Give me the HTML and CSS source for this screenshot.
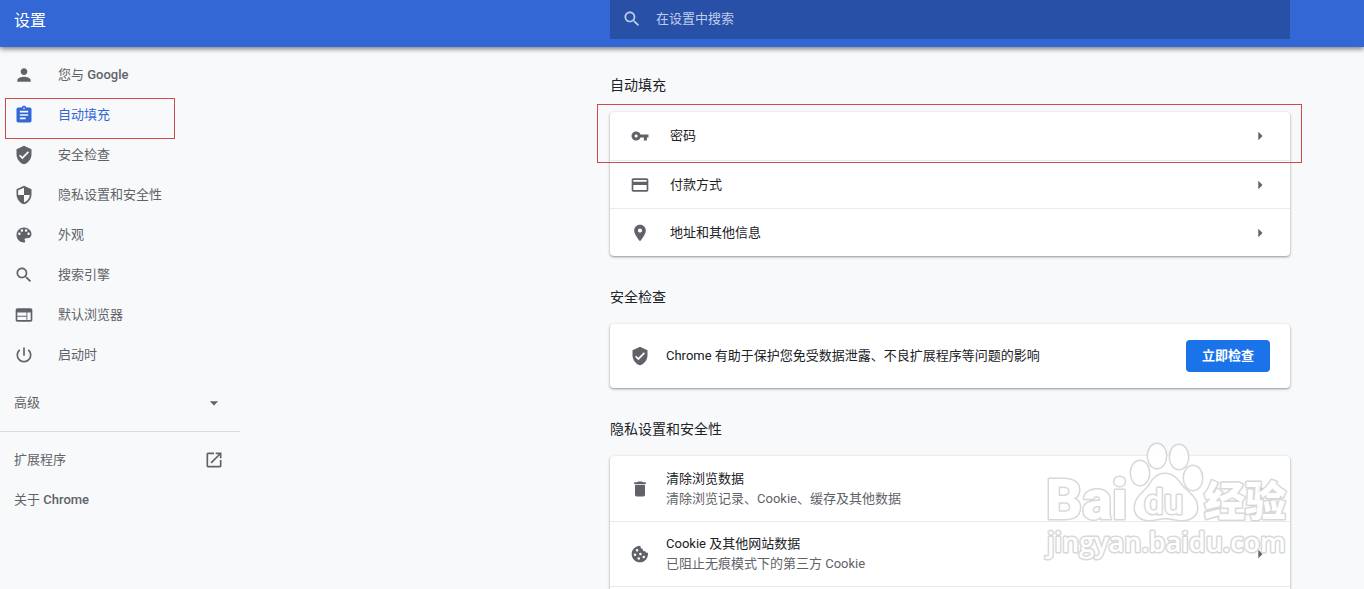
FILE: index.html
```html
<!DOCTYPE html>
<html lang="zh-CN">
<head>
    <meta charset="UTF-8">
    <meta name="viewport" content="width=device-width, initial-scale=1.0">
    <title>设置</title>
    <link rel="stylesheet" href="styles.css">
</head>
<body>
    <header class="toolbar">
        <h1>设置</h1>
        <label class="search">
            <svg class="icon" viewBox="0 0 24 24"><path d="M15.5 14h-.79l-.28-.27C15.41 12.59 16 11.11 16 9.5 16 5.91 13.09 3 9.5 3S3 5.91 3 9.5 5.91 16 9.5 16c1.61 0 3.09-.59 4.23-1.57l.27.28v.79l5 4.99L20.49 19l-4.99-5zm-6 0C7.01 14 5 11.99 5 9.5S7.01 5 9.5 5 14 7.01 14 9.5 11.99 14 9.5 14z"/></svg>
            <input type="search" placeholder="在设置中搜索" aria-label="在设置中搜索">
        </label>
    </header>

    <div class="container">
        <nav class="sidebar">
            <ul class="menu">
                <li><a href="#people">
                    <svg class="icon" viewBox="0 0 24 24"><path d="M12 12c2.21 0 4-1.79 4-4s-1.79-4-4-4-4 1.79-4 4 1.79 4 4 4zm0 2c-2.67 0-8 1.34-8 4v2h16v-2c0-2.66-5.33-4-8-4z"/></svg>
                    <span>您与 <b>Google</b></span>
                </a></li>
                <li class="marked"><a href="#autofill" class="selected">
                    <svg class="icon" viewBox="0 0 24 24"><path d="M19 3h-4.18C14.4 1.84 13.3 1 12 1c-1.3 0-2.4.84-2.82 2H5c-1.1 0-2 .9-2 2v14c0 1.1.9 2 2 2h14c1.1 0 2-.9 2-2V5c0-1.1-.9-2-2-2zm-7 0c.55 0 1 .45 1 1s-.45 1-1 1-1-.45-1-1 .45-1 1-1zm2 14H7v-2h7v2zm3-4H7v-2h10v2zm0-4H7V7h10v2z"/></svg>
                    <span>自动填充</span>
                </a></li>
                <li><a href="#safety">
                    <svg class="icon" viewBox="0 0 24 24"><path d="M12 1L3 5v6c0 5.55 3.84 10.74 9 12 5.16-1.26 9-6.45 9-12V5l-9-4zm-2 16l-4-4 1.41-1.41L10 14.17l6.59-6.59L18 9l-8 8z"/></svg>
                    <span>安全检查</span>
                </a></li>
                <li><a href="#privacy">
                    <svg class="icon" viewBox="0 0 24 24"><path d="M12 1L3 5v6c0 5.55 3.84 10.74 9 12 5.16-1.26 9-6.45 9-12V5l-9-4zm0 10.99h7c-.53 4.12-3.28 7.79-7 8.94V12H5V6.3l7-3.11v8.8z"/></svg>
                    <span>隐私设置和安全性</span>
                </a></li>
                <li><a href="#appearance">
                    <svg class="icon" viewBox="0 0 24 24"><path d="M12 3c-4.97 0-9 4.03-9 9s4.03 9 9 9c.83 0 1.5-.67 1.5-1.5 0-.39-.15-.74-.39-1.01-.23-.26-.38-.61-.38-.99 0-.83.67-1.5 1.5-1.5H16c2.76 0 5-2.24 5-5 0-4.42-4.03-8-9-8zm-5.5 9c-.83 0-1.5-.67-1.5-1.5S5.67 9 6.5 9 8 9.67 8 10.5 7.33 12 6.5 12zm3-4C8.67 8 8 7.33 8 6.5S8.67 5 9.5 5s1.5.67 1.5 1.5S10.33 8 9.5 8zm5 0c-.83 0-1.5-.67-1.5-1.5S13.67 5 14.5 5s1.5.67 1.5 1.5S15.33 8 14.5 8zm3 4c-.83 0-1.5-.67-1.5-1.5S16.67 9 17.5 9s1.5.67 1.5 1.5-.67 1.5-1.5 1.5z"/></svg>
                    <span>外观</span>
                </a></li>
                <li><a href="#search">
                    <svg class="icon" viewBox="0 0 24 24"><path d="M15.5 14h-.79l-.28-.27C15.41 12.59 16 11.11 16 9.5 16 5.91 13.09 3 9.5 3S3 5.91 3 9.5 5.91 16 9.5 16c1.61 0 3.09-.59 4.23-1.57l.27.28v.79l5 4.99L20.49 19l-4.99-5zm-6 0C7.01 14 5 11.99 5 9.5S7.01 5 9.5 5 14 7.01 14 9.5 11.99 14 9.5 14z"/></svg>
                    <span>搜索引擎</span>
                </a></li>
                <li><a href="#browser">
                    <svg class="icon" viewBox="0 0 24 24"><path d="M20 4H4c-1.1 0-1.99.9-1.99 2L2 18c0 1.1.9 2 2 2h16c1.1 0 2-.9 2-2V6c0-1.1-.9-2-2-2zm-5 14H4v-4h11v4zm0-5H4V9h11v4zm5 5h-4V9h4v9z"/></svg>
                    <span>默认浏览器</span>
                </a></li>
                <li><a href="#startup">
                    <svg class="icon" viewBox="0 0 24 24"><path d="M13 3h-2v10h2V3zm4.83 2.17l-1.42 1.42C17.99 7.86 19 9.81 19 12c0 3.87-3.13 7-7 7s-7-3.13-7-7c0-2.19 1.01-4.14 2.58-5.42L6.17 5.17C4.23 6.82 3 9.26 3 12c0 4.97 4.03 9 9 9s9-4.03 9-9c0-2.74-1.23-5.18-3.17-6.83z"/></svg>
                    <span>启动时</span>
                </a></li>
            </ul>
            <button class="advanced" type="button">
                <span>高级</span>
                <svg class="icon" viewBox="0 0 24 24"><path d="M7 10l5 5 5-5z"/></svg>
            </button>
            <ul class="links">
                <li><a href="#extensions">
                    <span>扩展程序</span>
                    <svg class="icon" viewBox="0 0 24 24"><path d="M19 19H5V5h7V3H5c-1.11 0-2 .9-2 2v14c0 1.1.89 2 2 2h14c1.1 0 2-.9 2-2v-7h-2v7zM14 3v2h3.59l-9.83 9.83 1.41 1.41L19 6.41V10h2V3h-7z"/></svg>
                </a></li>
                <li><a href="#about"><span>关于 <b>Chrome</b></span></a></li>
            </ul>
        </nav>

        <main class="content">
            <section>
                <h2>自动填充</h2>
                <div class="card">
                    <button class="row marked" type="button">
                        <svg class="icon" viewBox="-1 -1 26 26"><path d="M12.65 10C11.83 7.67 9.61 6 7 6c-3.31 0-6 2.69-6 6s2.69 6 6 6c2.61 0 4.83-1.67 5.65-4H17v4h4v-4h2v-4H12.65zM7 14c-1.1 0-2-.9-2-2s.9-2 2-2 2 .9 2 2-.9 2-2 2z"/></svg>
                        <span class="label">密码</span>
                        <svg class="icon arrow" viewBox="0 0 24 24"><path d="M10 17l5-5-5-5z"/></svg>
                    </button>
                    <button class="row" type="button">
                        <svg class="icon" viewBox="0 0 24 24"><path d="M20 4H4c-1.11 0-1.99.89-1.99 2L2 18c0 1.11.89 2 2 2h16c1.11 0 2-.89 2-2V6c0-1.11-.89-2-2-2zm0 14H4v-6h16v6zm0-10H4V6h16v2z"/></svg>
                        <span class="label">付款方式</span>
                        <svg class="icon arrow" viewBox="0 0 24 24"><path d="M10 17l5-5-5-5z"/></svg>
                    </button>
                    <button class="row" type="button">
                        <svg class="icon" viewBox="0 0 24 24"><path d="M12 2C8.13 2 5 5.13 5 9c0 5.25 7 13 7 13s7-7.75 7-13c0-3.87-3.13-7-7-7zm0 9.5c-1.38 0-2.5-1.12-2.5-2.5s1.12-2.5 2.5-2.5 2.5 1.12 2.5 2.5-1.12 2.5-2.5 2.5z"/></svg>
                        <span class="label">地址和其他信息</span>
                        <svg class="icon arrow" viewBox="0 0 24 24"><path d="M10 17l5-5-5-5z"/></svg>
                    </button>
                </div>
            </section>

            <section>
                <h2>安全检查</h2>
                <div class="card">
                    <div class="row tall">
                        <svg class="icon" viewBox="0 0 24 24"><path d="M12 1L3 5v6c0 5.55 3.84 10.74 9 12 5.16-1.26 9-6.45 9-12V5l-9-4zm-2 16l-4-4 1.41-1.41L10 14.17l6.59-6.59L18 9l-8 8z"/></svg>
                        <span class="label">Chrome 有助于保护您免受数据泄露、不良扩展程序等问题的影响</span>
                        <button class="action" type="button">立即检查</button>
                    </div>
                </div>
            </section>

            <section>
                <h2>隐私设置和安全性</h2>
                <div class="card">
                    <button class="row tall" type="button">
                        <svg class="icon" viewBox="0 0 24 24"><path d="M6 19c0 1.1.9 2 2 2h8c1.1 0 2-.9 2-2V7H6v12zM19 4h-3.5l-1-1h-5l-1 1H5v2h14V4z"/></svg>
                        <span class="label">清除浏览数据<small>清除浏览记录、Cookie、缓存及其他数据</small></span>
                        <svg class="icon arrow" viewBox="0 0 24 24"><path d="M10 17l5-5-5-5z"/></svg>
                    </button>
                    <button class="row tall" type="button">
                        <svg class="icon" viewBox="0 0 24 24"><path fill-rule="evenodd" d="M21.6 10.5c-1.3.5-2.8-.3-3.1-1.9-2 .5-3.7-1-3.3-3-2 .2-3.2-1.7-2.5-3.5C6.8 1.8 2 6.4 2 12c0 5.5 4.5 10 10 10s10-4.5 9.6-11.5zM8.5 6a1.5 1.5 0 1 1 0 3 1.5 1.5 0 0 1 0-3zM6 11.5a1.5 1.5 0 1 1 0 3 1.5 1.5 0 0 1 0-3zM12.5 10.5a1.5 1.5 0 1 1 0 3 1.5 1.5 0 0 1 0-3zM10.5 16a1.5 1.5 0 1 1 0 3 1.5 1.5 0 0 1 0-3zM16.500 14a1.5 1.5 0 1 1 0 3 1.5 1.5 0 0 1 0-3z"/></svg>
                        <span class="label">Cookie 及其他网站数据<small>已阻止无痕模式下的第三方 Cookie</small></span>
                        <svg class="icon arrow" viewBox="0 0 24 24"><path d="M10 17l5-5-5-5z"/></svg>
                    </button>
                    <div class="row tall"></div>
                </div>
            </section>
        </main>
    </div>

    <svg class="watermark" viewBox="0 0 250 125" width="250" height="125">
        <ellipse cx="98" cy="33" rx="9" ry="12"/>
        <ellipse cx="115" cy="16" rx="9" ry="12"/>
        <ellipse cx="137" cy="17" rx="9" ry="12"/>
        <ellipse cx="151" cy="38" rx="9" ry="12"/>
        <path d="M123 34c-8 0-12 5-16 12-5 7-14 11-14 22 0 8 7 12 14 12 6 0 10-2 16-2s11 2 17 2c8 0 15-4 15-12 0-11-9-15-15-22-5-7-9-12-17-12z"/>
        <text class="logo" x="4" y="79">Bai</text>
        <text class="logo-du" x="102" y="74">du</text>
        <text class="logo-cn" x="162" y="76">经验</text>
        <text class="site" x="5" y="112">jingyan.baidu.com</text>
    </svg>
</body>
</html>
```
FILE: styles.css
```css
*, *::after {
    box-sizing: border-box;
}

body {
    margin: 0;
    height: 100vh;
    display: flex;
    flex-direction: column;
    overflow: hidden;
    position: relative;
    background-color: #f8f9fb;
    color: #202124;
    font-family: Roboto, "Noto Sans CJK SC", sans-serif;
    font-size: 13px;
    line-height: 20px;
}

h1, h2, ul {
    margin: 0;
    padding: 0;
    font-weight: 400;
}

ul {
    list-style: none;
}

a {
    color: inherit;
    text-decoration: none;
}

button, input {
    font: inherit;
    color: inherit;
    border: none;
    background: none;
}

button {
    cursor: pointer;
}

.icon {
    width: 20px;
    height: 20px;
    flex: none;
    fill: #5f6368;
}

/* toolbar */
.toolbar {
    flex: none;
    height: 47px;
    padding: 0 74px 0 14px;
    display: flex;
    justify-content: space-between;
    background-color: #3367d6;
    color: #fff;
    box-shadow: 0 2px 5px rgba(0, 0, 0, 0.5);
    z-index: 1;
}

.toolbar h1 {
    font-size: 16px;
    line-height: 42px;
}

.search {
    width: 680px;
    height: 39px;
    padding: 0 12px 2px;
    display: flex;
    align-items: center;
    gap: 14px;
    background-color: #2950a7;
}

.search .icon {
    fill: #bfcdee;
}

.search input {
    flex: 1;
    padding: 0;
    outline: none;
}

.search input::placeholder {
    color: #bfcdee;
}

.container {
    flex: 1;
    min-height: 0;
    display: flex;
    justify-content: space-between;
    overflow: hidden;
}

/* sidebar */
.sidebar {
    width: 240px;
    padding-top: 8px;
    color: #5f6368;
}

.sidebar b {
    font-weight: 500;
}

.menu li {
    position: relative;
}

.menu a, .links a {
    height: 40px;
    padding: 0 16px 0 14px;
    display: flex;
    align-items: center;
    gap: 24px;
}

.menu .selected {
    color: #3367d6;
}

.menu .selected .icon {
    fill: #3367d6;
}

.links a {
    justify-content: space-between;
}

.advanced {
    width: 100%;
    height: 40px;
    margin: 8px 0;
    padding: 0 16px 0 14px;
    display: flex;
    align-items: center;
    justify-content: space-between;
}

.links {
    padding-top: 8px;
    border-top: 1px solid #dadce0;
}

/* content */
.content {
    width: 680px;
    margin-right: 74px;
    margin-top: -3px;
}

.content h2 {
    padding: 27px 0 13px;
    font-size: 14px;
    line-height: 28px;
}

.card {
    background-color: #fff;
    border-radius: 4px;
    box-shadow: 0 1px 2px rgba(60, 64, 67, 0.3), 0 1px 3px rgba(60, 64, 67, 0.3);
}

.row {
    position: relative;
    width: 100%;
    height: 48px;
    padding: 0 20px;
    display: flex;
    align-items: center;
    gap: 20px;
    text-align: left;
}

.row + .row {
    border-top: 1px solid #e8eaed;
}

.row.tall {
    height: 65px;
    gap: 16px;
}

.row.tall:only-child {
    height: 64px;
}

.label {
    flex: 1;
}

.label small {
    display: block;
    font-size: 13px;
    color: #5f6368;
}

.action {
    height: 32px;
    padding: 0 16px;
    border-radius: 4px;
    background-color: #1a73e8;
    color: #fff;
    font-weight: 700;
}

/* red frames */
.marked::after {
    content: "";
    position: absolute;
    border: 1px solid #cf4a4e;
    pointer-events: none;
}

.menu .marked::after {
    top: 3px;
    left: 5px;
    width: 170px;
    height: 41px;
}

.row.marked::after {
    inset: -8px -12px -3px -13px;
    z-index: 1;
}

/* watermark */
.watermark {
    position: absolute;
    right: 72px;
    bottom: 24px;
    fill: #fff;
    stroke: #d4d4d4;
    stroke-width: 3px;
    stroke-linejoin: round;
    paint-order: stroke;
    opacity: 0.9;
    pointer-events: none;
}

.logo {
    font-size: 56px;
    font-weight: 900;
}

.logo-du {
    font-size: 35px;
    font-weight: 500;
}

.logo-cn {
    font-size: 41px;
    font-weight: 900;
}

.site {
    font-family: "Open Sans", sans-serif;
    font-size: 27px;
    font-weight: 600;
}
```
